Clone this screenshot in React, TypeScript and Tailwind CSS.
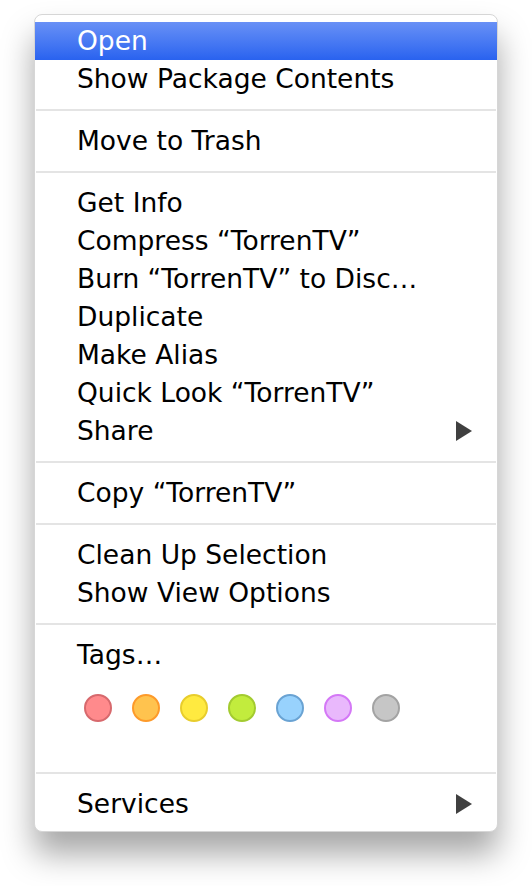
import React from 'react';

type Row =
  | { kind: 'item'; label: string; active?: boolean; submenu?: boolean }
  | { kind: 'sep' }
  | { kind: 'tags' };

const rows: Row[] = [
  { kind: 'item', label: 'Open', active: true },
  { kind: 'item', label: 'Show Package Contents' },
  { kind: 'sep' },
  { kind: 'item', label: 'Move to Trash' },
  { kind: 'sep' },
  { kind: 'item', label: 'Get Info' },
  { kind: 'item', label: 'Compress \u201CTorrenTV\u201D' },
  { kind: 'item', label: 'Burn \u201CTorrenTV\u201D to Disc\u2026' },
  { kind: 'item', label: 'Duplicate' },
  { kind: 'item', label: 'Make Alias' },
  { kind: 'item', label: 'Quick Look \u201CTorrenTV\u201D' },
  { kind: 'item', label: 'Share', submenu: true },
  { kind: 'sep' },
  { kind: 'item', label: 'Copy \u201CTorrenTV\u201D' },
  { kind: 'sep' },
  { kind: 'item', label: 'Clean Up Selection' },
  { kind: 'item', label: 'Show View Options' },
  { kind: 'sep' },
  { kind: 'item', label: 'Tags\u2026' },
  { kind: 'tags' },
  { kind: 'sep' },
  { kind: 'item', label: 'Services', submenu: true },
];

const tagColors = [
  'bg-[#ff8a8c] border-[#d7696d]',
  'bg-[#ffc34e] border-[#fd9a2a]',
  'bg-[#ffea40] border-[#e8cd2c]',
  'bg-[#c2ec3d] border-[#a3cb30]',
  'bg-[#98d2fd] border-[#6aa3d3]',
  'bg-[#e9b8fc] border-[#d478f6]',
  'bg-[#c6c6c6] border-[#a3a3a3]',
];

function Arrow() {
  return (
    <svg width="16" height="20" viewBox="0 0 16 20" className="shrink-0">
      <path d="M0 0 L16 10 L0 20 Z" fill="#404040" />
    </svg>
  );
}

export default function App() {
  return (
    <div className="w-[532px] h-[886px] bg-white pt-[14px] pl-[34px]" style={{ fontFamily: '"DejaVu Sans", sans-serif' }}>
      <div className="w-[464px] h-[818px] rounded-[8px] bg-white border border-[#d6d6d6] shadow-[0_22px_32px_rgba(0,0,0,0.35)] overflow-hidden pt-[7px]">
        {rows.map((row, i) => {
          if (row.kind === 'sep') {
            return (
              <div key={i} className="h-[24px] flex items-center px-[1px]">
                <div className="h-[2px] w-full bg-[#e4e4e4]" />
              </div>
            );
          }
          if (row.kind === 'tags') {
            return (
              <div key={i} className="h-[87px] flex items-start gap-[20px] pl-[49px] pt-[20px]">
                {tagColors.map((c) => (
                  <div key={c} className={`w-[28px] h-[28px] rounded-full border-2 ${c}`} />
                ))}
              </div>
            );
          }
          return (
            <div
              key={i}
              className={
                row.active
                  ? 'h-[38px] flex items-center justify-between pl-[42px] pr-[25px] text-white bg-gradient-to-b from-[#6890f6] to-[#2962ef]'
                  : 'h-[38px] flex items-center justify-between pl-[42px] pr-[25px] text-black'
              }
            >
              <span className="text-[26.5px] leading-none">{row.label}</span>
              {row.submenu && <Arrow />}
            </div>
          );
        })}
      </div>
    </div>
  );
}
